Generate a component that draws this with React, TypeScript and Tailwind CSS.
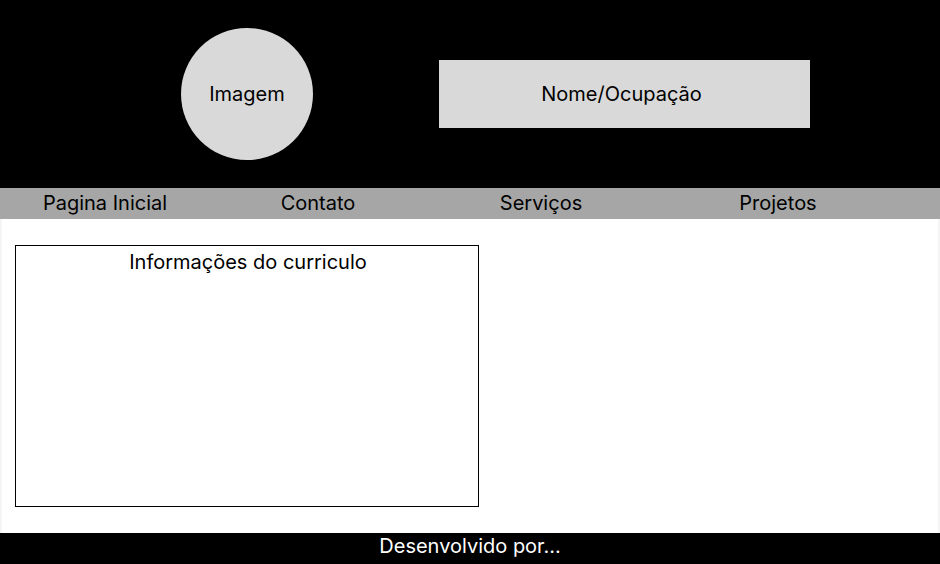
export default function App() {
  const links = [
    { label: "Pagina Inicial", w: "w-[210px]" },
    { label: "Contato", w: "w-[216px]" },
    { label: "Serviços", w: "w-[230px]" },
    { label: "Projetos", w: "w-[244px]" },
  ];

  return (
    <div className="w-[940px] h-[564px] flex flex-col bg-white text-black font-['Inter',sans-serif]">
      {/* Header */}
      <header className="h-[188px] bg-black flex items-center pl-[181px] gap-[126px]">
        <div className="w-[132px] h-[132px] rounded-full bg-[#d9d9d9] flex items-center justify-center text-[20px]">
          Imagem
        </div>
        <div className="w-[371px] h-[68px] bg-[#d9d9d9] flex items-center justify-center text-[20px] pr-[6px] pb-[1px]">
          Nome/Ocupação
        </div>
      </header>

      {/* Nav */}
      <nav className="h-[31px] bg-[#a6a6a6] flex items-center text-[20px] pb-[2px]">
        {links.map((l) => (
          <div key={l.label} className={`${l.w} text-center`}>
            {l.label}
          </div>
        ))}
      </nav>

      {/* Content */}
      <main className="flex-1 bg-[#f5f5f5] px-[2px]">
        <div className="h-full bg-white pt-[26px] pl-[13px]">
          <section className="w-[464px] h-[262px] border border-black text-center text-[20px] leading-[32px] pl-[2px]">
            Informações do curriculo
          </section>
        </div>
      </main>

      {/* Footer */}
      <footer className="h-[31px] bg-black text-white flex items-center justify-center text-[20px] pb-[5px]">
        Desenvolvido por...
      </footer>
    </div>
  );
}
